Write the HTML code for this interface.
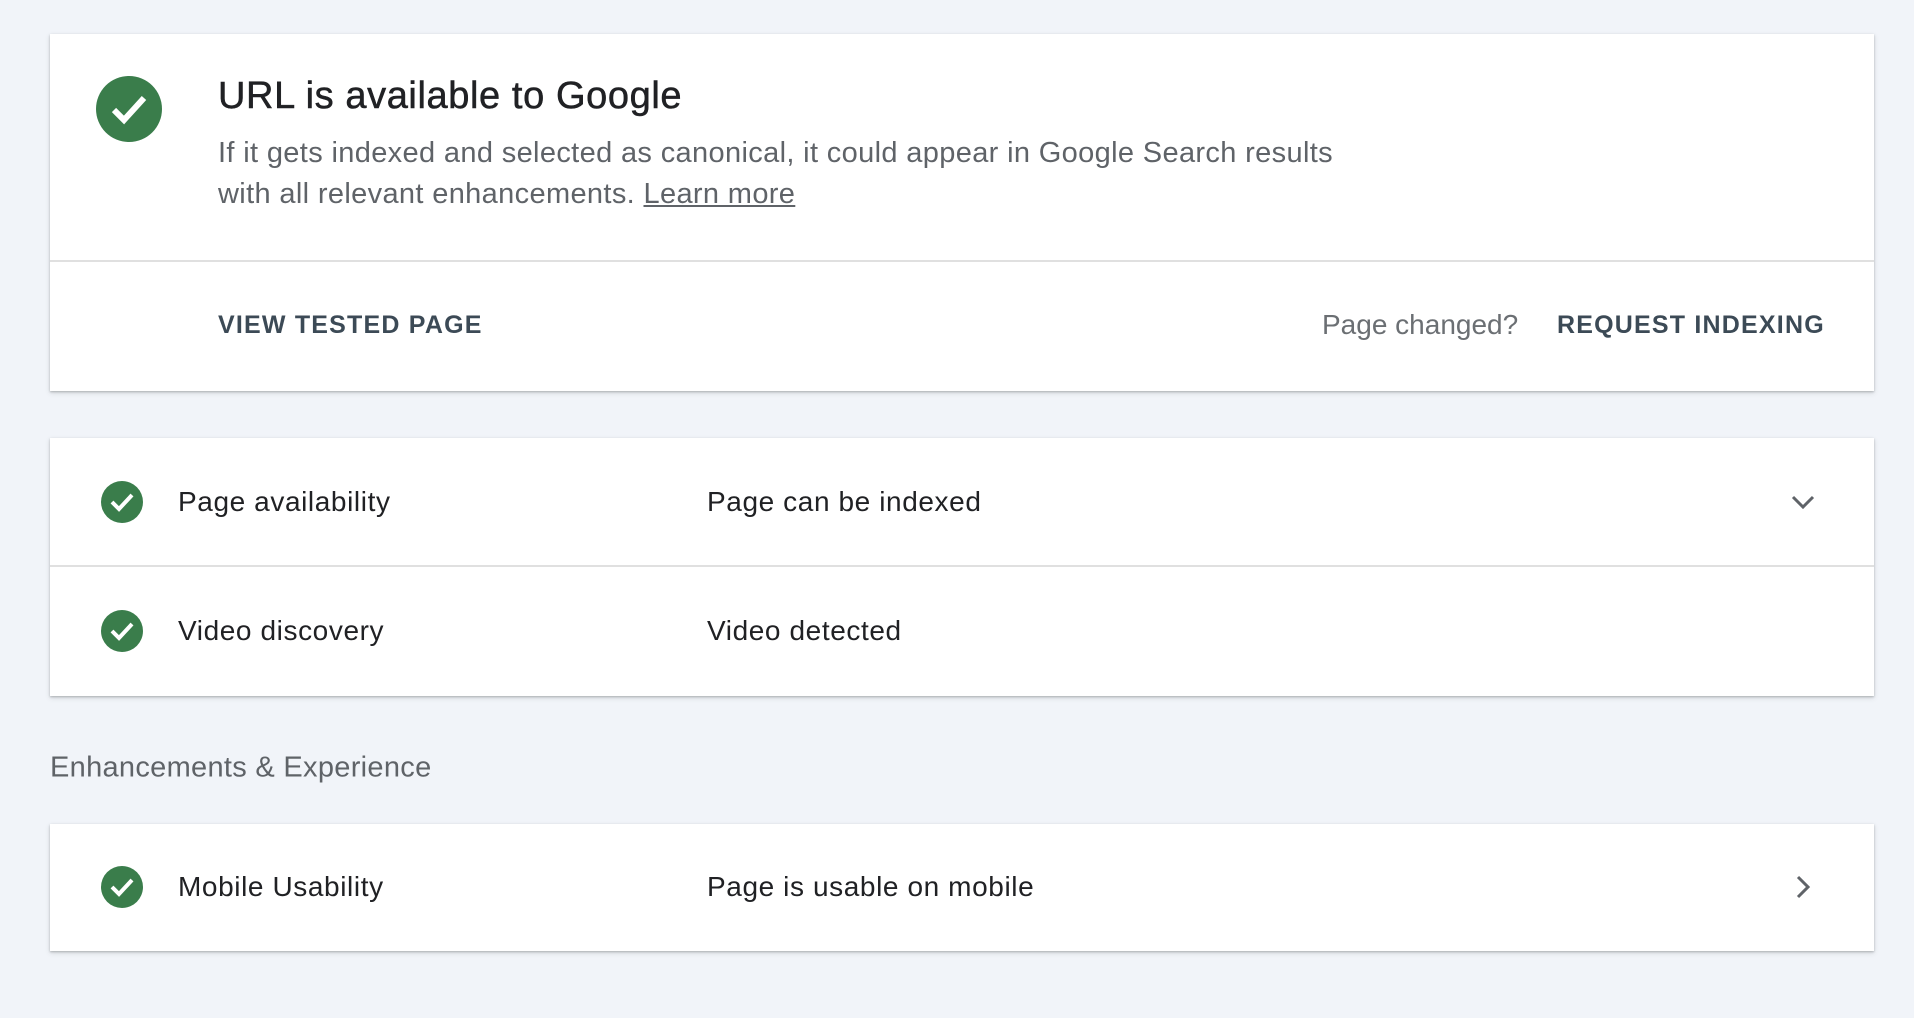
<!DOCTYPE html>
<html><head><meta charset="utf-8">
<style>
*{margin:0;padding:0;box-sizing:border-box}
html,body{width:1914px;height:1018px;overflow:hidden;background:#f1f4f9;font-family:"Liberation Sans",Arial,sans-serif;}
.card{position:absolute;left:50px;width:1824px;background:#fff;box-shadow:0 1px 2px rgba(60,64,67,.3),0 2px 5px rgba(60,64,67,.15);}
.abs{position:absolute;white-space:nowrap}
.row{position:absolute;left:0;width:100%;}
.lbl{position:absolute;left:128px;font-size:28px;letter-spacing:0.6px;color:#202124;transform:translateY(-50%)}
.val{position:absolute;left:657px;font-size:28px;letter-spacing:0.6px;color:#202124;transform:translateY(-50%)}
.ic{position:absolute;left:51px;width:42px;height:42px;transform:translateY(-50%)}
</style></head><body>
<svg class="abs" style="left:1834px;top:-20px" width="30" height="26"><circle cx="15" cy="6" r="11" fill="none" stroke="#5f6368" stroke-width="3"/></svg>

<div class="card" style="top:34px;height:357px">
  <svg class="abs" style="left:46px;top:42px" width="66" height="66" viewBox="0 0 66 66"><circle cx="33" cy="33" r="33" fill="#3a7d4b"/><path d="M18 34 L28 44 L48 22" fill="none" stroke="#fff" stroke-width="6"/></svg>
  <div class="abs" style="left:168px;top:41px;font-size:38px;color:#202124;letter-spacing:0.6px;-webkit-text-stroke:0.5px #202124">URL is available to Google</div>
  <div class="abs" style="left:168px;top:99px;font-size:29px;line-height:41px;color:#5f6368;letter-spacing:0.35px">If it gets indexed and selected as canonical, it could appear in Google Search results<br>with all relevant enhancements. <span style="text-decoration:underline;color:#5f6368">Learn more</span></div>
  <div class="abs" style="left:0;top:226px;width:100%;height:2px;background:#e0e0e0"></div>
  <div class="abs" style="left:168px;top:277px;font-size:25px;font-weight:bold;color:#3c4a56;letter-spacing:1.2px">VIEW TESTED PAGE</div>
  <div class="abs" style="left:1272px;top:275px;font-size:28px;color:#6b6f73">Page changed?</div>
  <div class="abs" style="left:1507px;top:277px;font-size:25px;font-weight:bold;color:#3c4a56;letter-spacing:1.2px">REQUEST INDEXING</div>
</div>

<div class="card" style="top:438px;height:258px">
  <div class="row" style="top:64px">
    <svg class="ic" viewBox="0 0 42 42"><circle cx="21" cy="21" r="21" fill="#3a7d4b"/><path d="M11 21 L18 28 L31 14" fill="none" stroke="#fff" stroke-width="4"/></svg>
    <div class="lbl">Page availability</div><div class="val">Page can be indexed</div>
    <svg class="abs" style="left:1740px;top:-9px" width="26" height="18"><path d="M3 4 L13 14 L23 4" fill="none" stroke="#5f6368" stroke-width="3"/></svg>
  </div>
  <div class="abs" style="left:0;top:127px;width:100%;height:2px;background:#e0e0e0"></div>
  <div class="row" style="top:193px">
    <svg class="ic" viewBox="0 0 42 42"><circle cx="21" cy="21" r="21" fill="#3a7d4b"/><path d="M11 21 L18 28 L31 14" fill="none" stroke="#fff" stroke-width="4"/></svg>
    <div class="lbl">Video discovery</div><div class="val">Video detected</div>
  </div>
</div>

<div class="abs" style="left:50px;top:768px;transform:translateY(-50%);font-size:29px;letter-spacing:0.3px;color:#5f6368">Enhancements &amp; Experience</div>

<div class="card" style="top:824px;height:127px">
  <div class="row" style="top:63px">
    <svg class="ic" viewBox="0 0 42 42"><circle cx="21" cy="21" r="21" fill="#3a7d4b"/><path d="M11 21 L18 28 L31 14" fill="none" stroke="#fff" stroke-width="4"/></svg>
    <div class="lbl">Mobile Usability</div><div class="val">Page is usable on mobile</div>
    <svg class="abs" style="left:1744px;top:-13px" width="18" height="26"><path d="M4 3 L14 13 L4 23" fill="none" stroke="#5f6368" stroke-width="3"/></svg>
  </div>
</div>
</body></html>
